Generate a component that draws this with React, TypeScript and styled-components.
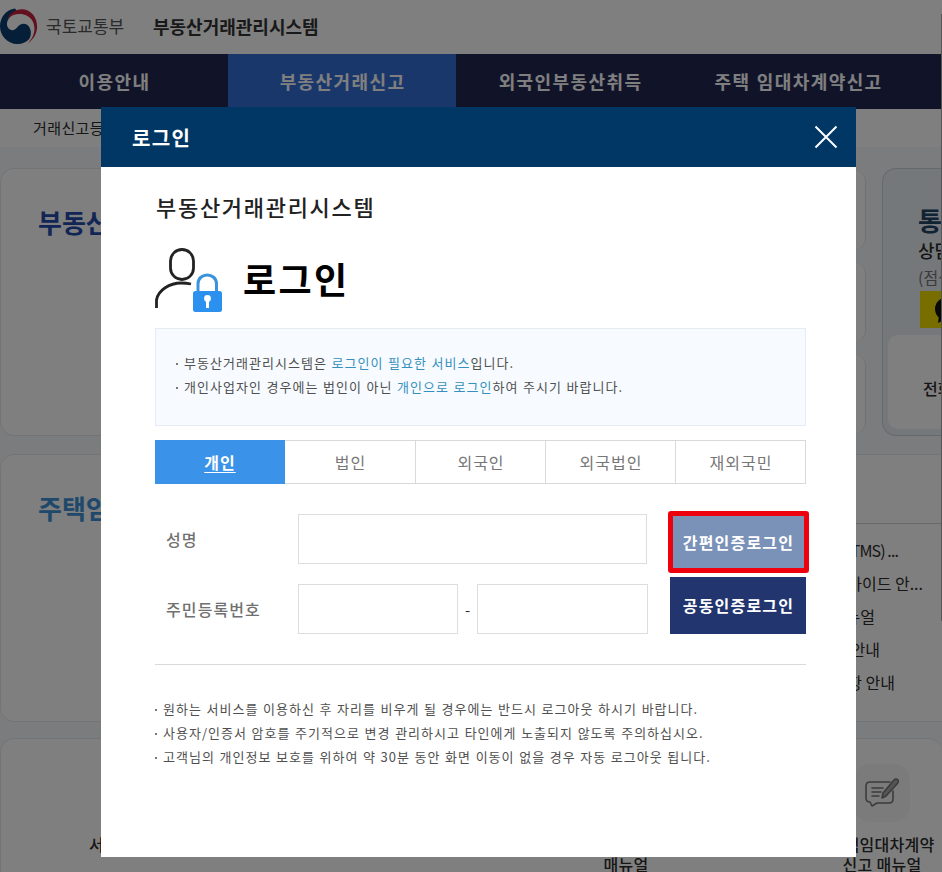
import React from 'react';
import styled, { createGlobalStyle, css } from 'styled-components';

const GlobalStyle = createGlobalStyle`
  * { box-sizing: border-box; }
  body {
    margin: 0;
    overflow: hidden;
    font-family: "Noto Sans CJK KR", "Noto Sans", sans-serif;
    color: #2c2c2c;
  }
  p, h1, h2, ul { margin: 0; padding: 0; }
  ul { list-style: none; }
`;

const Page = styled.div`
  position: relative;
  width: 942px;
  height: 872px;
  overflow: hidden;
  background: #f7f8fd;
  white-space: nowrap;
`;

const TopBar = styled.header`
  display: flex;
  align-items: center;
  height: 54px;
  padding-bottom: 1px;
  background: #fff;
`;

const Ministry = styled.span`
  margin-left: 8px;
  width: 107px;
  padding-bottom: 2px;
  font-size: 17px;
  line-height: 24px;
  color: #555;
`;

const SiteName = styled.span`
  padding-bottom: 2px;
  font-size: 18px;
  line-height: 24px;
  font-weight: 700;
  color: #333;
`;

const Nav = styled.nav`
  display: grid;
  grid-template-columns: repeat(4, 228px);
  height: 55px;
  background: #222753;
`;

const NavItem = styled.a<{ $active?: boolean }>`
  display: flex;
  align-items: center;
  justify-content: center;
  padding: 0 0 1px 1px;
  background: ${(p) => (p.$active ? '#346fd8' : 'transparent')};
  color: #fff;
  font-size: 18px;
  font-weight: 700;
  letter-spacing: 1.4px;
  word-spacing: 1px;
`;

const SubBar = styled.div`
  height: 38px;
  padding-left: 33px;
  background: #fff;
  font-size: 15px;
  line-height: 38px;
  letter-spacing: 0.4px;
`;

const Main = styled.main`
  display: grid;
  grid-template-rows: 270px 268px 150px;
  row-gap: 16px;
  padding-top: 21px;
`;

const TopRow = styled.div`
  display: grid;
  grid-template-columns: 400px 1fr 60px;
  column-gap: 16px;
  height: 268px;
`;

const Card = styled.section`
  border: 1px solid #e6e8ee;
  border-radius: 14px;
  background: #fff;
`;

const CardTitle = styled.h2<{ $light?: boolean }>`
  padding: 33px 0 0 37px;
  font-size: 26px;
  line-height: 40px;
  font-weight: 700;
  color: ${(p) => (p.$light ? '#3f91d6' : '#234bad')};
`;

const MiniCards = styled.div`
  display: grid;
  grid-template-rows: repeat(3, 80px);
  row-gap: 12px;
  padding-top: 2px;
`;

const MiniCard = styled.div`
  border-right: 1px solid #e3e3e6;
  border-radius: 12px;
  background: #fff;
`;

const CallCenter = styled.section`
  height: 268px;
  padding: 34px 0 0 5px;
  overflow: hidden;
  border: 1px solid #c9d3d9;
  border-right: 0;
  border-radius: 14px 0 0 14px;
  background: #eaf0f5;
`;

const CallTitle = styled.p`
  padding-left: 30px;
  font-size: 26px;
  line-height: 34px;
  font-weight: 700;
  color: #234466;
`;

const CallSubtitle = styled.p`
  padding-left: 30px;
  font-size: 18px;
  line-height: 26px;
  font-weight: 500;
`;

const CallHint = styled.p`
  padding-left: 30px;
  font-size: 16px;
  line-height: 28px;
  color: #777;
`;

const KakaoBadge = styled.div`
  width: 60px;
  height: 37px;
  margin: 0 0 7px 32px;
  background: #f1dc00;
`;

const CallBox = styled.div`
  height: 94px;
  padding: 41px 0 0 35px;
  border-radius: 10px 0 0 10px;
  background: #fff;
  font-size: 16px;
  line-height: 24px;
  font-weight: 500;
`;

const MiddleRow = styled.div`
  display: grid;
  grid-template-columns: 560px 1fr;
  column-gap: 16px;
`;

const NoticeCard = styled(Card)`
  border-width: 1px 0;
  border-radius: 0;
`;

const NoticeHead = styled.div`
  height: 69px;
  border-bottom: 1px solid #d3d3d6;
`;

const NoticeList = styled.ul`
  padding-top: 10px;
`;

const NoticeItem = styled.li<{ $end: number; $tight?: boolean }>`
  padding-right: ${(p) => p.$end}px;
  text-align: right;
  font-size: 16px;
  line-height: 33px;
  letter-spacing: ${(p) => (p.$tight ? '-0.9px' : '0')};
`;

const ShortcutCard = styled(Card)`
  display: grid;
  grid-template-columns: 255px 1fr 226px 87px 112px 4px;
  border-right: 0;
  padding-top: 25px;
`;

const Shortcut = styled.div`
  display: flex;
  flex-direction: column;
  align-items: center;
  font-size: 16px;
  line-height: 20px;
  font-weight: 500;
  letter-spacing: 0.3px;
  text-align: center;
`;

const ShortcutIcon = styled.div`
  display: flex;
  align-items: center;
  justify-content: center;
  width: 56px;
  height: 58px;
  margin-bottom: 12px;
  border-radius: 16px;
  background: #f7f7f7;
`;

const Backdrop = styled.div`
  position: absolute;
  inset: 0;
  background: rgba(0, 0, 0, 0.5);
`;

const ScrollEdge = styled.div`
  position: absolute;
  top: 14px;
  right: 0;
  width: 1px;
  height: 607px;
  background: #555;
`;

const Dialog = styled.div`
  position: absolute;
  left: 101px;
  top: 107px;
  width: 755px;
  height: 750px;
  background: #fff;
`;

const DialogHeader = styled.div`
  display: flex;
  align-items: center;
  justify-content: space-between;
  height: 60px;
  padding: 0 18px 0 31px;
  background: #003764;
  color: #fff;
  font-size: 20px;
  font-weight: 700;
  letter-spacing: 1.3px;
`;

const DialogBody = styled.div`
  padding: 23px 50px 0 54px;
`;

const SystemName = styled.p`
  margin-left: 1px;
  font-size: 22px;
  line-height: 32px;
  font-weight: 500;
  letter-spacing: 1.7px;
  color: #222;
`;

const LoginHeading = styled.div`
  display: flex;
  align-items: center;
  height: 66px;
  margin: 25px 0 15px;
`;

const LoginTitle = styled.h1`
  margin: 0 0 5px 20px;
  font-size: 36px;
  line-height: 50px;
  font-weight: 700;
  letter-spacing: 2.4px;
  color: #000;
`;

const InfoBox = styled.ul`
  height: 98px;
  padding: 22px 0 0 20px;
  border: 1px solid #e4ecf4;
  background: #f7fbff;
`;

const Note = styled.li`
  display: flex;
  font-size: 13px;
  line-height: 24px;
  letter-spacing: 1.03px;
  word-spacing: 0.6px;
  color: #505050;
  white-space: pre;
  &::before {
    content: "";
    align-self: center;
    flex: none;
    width: 2px;
    height: 2px;
    margin: 1px 6px 0 0;
    background: #777;
  }
`;

const Accent = styled.span`
  color: #3590bd;
`;

const Tabs = styled.div`
  display: grid;
  grid-template-columns: 130px 131px 130px 130px 130px;
  width: 651px;
  height: 44px;
  margin-top: 14px;
`;

const Tab = styled.button<{ $active?: boolean }>`
  padding: 0 0 1px 1px;
  border: 1px solid #d9d9d9;
  border-left: 0;
  border-color: ${(p) => (p.$active ? '#3a93e8' : '#d9d9d9')};
  background: ${(p) => (p.$active ? '#3a93e8' : '#fff')};
  color: ${(p) => (p.$active ? '#fff' : '#777')};
  font: ${(p) => (p.$active ? 700 : 400)} 16px "Noto Sans CJK KR", sans-serif;
  letter-spacing: 1px;
  text-decoration: ${(p) => (p.$active ? 'underline' : 'none')};
  text-underline-offset: 3px;
`;

const Form = styled.form`
  display: grid;
  grid-template-columns: 493px 136px;
  column-gap: 22px;
  height: 181px;
  padding-top: 30px;
  border-bottom: 1px solid #d9d9d9;
`;

const Fields = styled.div`
  display: grid;
  grid-template-rows: 50px 50px;
  row-gap: 20px;
`;

const Field = styled.div`
  display: flex;
  align-items: center;
`;

const Label = styled.label`
  width: 143px;
  padding: 0 0 1px 11px;
  font-size: 16px;
  font-weight: 500;
  letter-spacing: 1.1px;
  color: #707070;
`;

const Input = styled.input<{ $w: number }>`
  width: ${(p) => p.$w}px;
  height: 50px;
  border: 1px solid #ddd;
  background: #fff;
`;

const Dash = styled.span`
  width: 19px;
  text-align: center;
  font-size: 15px;
`;

const Buttons = styled.div`
  display: flex;
  flex-direction: column;
  gap: 6px;
`;

const LoginButton = styled.button<{ $simple?: boolean }>`
  position: relative;
  height: 57px;
  padding: 0 0 1px 1px;
  border: 0;
  background: ${(p) => (p.$simple ? '#7a91b8' : '#22356f')};
  color: #fff;
  font: 700 16px "Noto Sans CJK KR", sans-serif;
  letter-spacing: 1.2px;
  ${(p) =>
    p.$simple &&
    css`
      &::after {
        content: "";
        position: absolute;
        inset: -3px -3px -2px -2px;
        border: 5px solid #ee000c;
        border-radius: 3px;
      }
    `}
`;

const Footnotes = styled.ul`
  padding-top: 32px;
`;

const GovLogo = () => (
  <svg width="38" height="37" viewBox="0 0 38 37">
    <path
      d="M15 0.5C6 2 0 9 0 18.5C0 28 8 36 17 36C22.5 36 27 34 29.5 30.5C32 26 31 20 27.5 17C24 14.5 19.5 15.8 17.5 19C15.5 22 12.5 23 10 21.5C6.5 19.5 6 15 8.5 11C10.5 8 13.5 5 17 3Z"
      fill="#0a3f72"
    />
    <path d="M7 11.5C11 1 25 -3 33 6.5C40 15.5 38 29 27.5 35.5C34 29.5 36.5 20.5 32.5 13C27.5 4.5 14.5 3.5 7 11.5Z" fill="#c8223e" />
  </svg>
);

const CloseIcon = () => (
  <svg width="24" height="24" viewBox="0 0 24 24" stroke="#fff" strokeWidth="2" fill="none">
    <path d="M1.5 1.5L22.5 22.5M22.5 1.5L1.5 22.5" />
  </svg>
);

const UserLockIcon = () => (
  <svg width="68" height="66" viewBox="0 0 68 66" fill="none">
    <rect x="15.5" y="2.5" width="23" height="30" rx="11.5" stroke="#222" strokeWidth="2.8" />
    <path d="M1.5 61V53C3 43 15 36 26 36C30 36 33 36.3 36 37" stroke="#222" strokeWidth="2.8" />
    <path d="M43 45V37C43 25 61.5 25 61.5 37V45" stroke="#3b93dc" strokeWidth="3" />
    <rect x="38" y="44" width="29" height="21" rx="2.5" fill="#2c90ee" />
    <circle cx="52.5" cy="51.4" r="3.4" fill="#fff" />
    <path d="M51 52H54V61H51Z" fill="#fff" />
  </svg>
);

const ManualIcon = () => (
  <svg width="34" height="30" viewBox="0 0 34 30" fill="none" stroke="#777" strokeWidth="1.6" strokeLinecap="round" strokeLinejoin="round">
    <path d="M25 4H5Q1 4 1 8V20Q1 24 5 24L7 28L12 25H24Q28 25 28 21V13" />
    <path d="M7 10H18M7 14H16M7 18H14" />
    <path d="M17 20L18 15L29 2Q31 0 33 2Q34 4 32 6L21 18Z" fill="#aaa" />
  </svg>
);

const ChatGlyph = () => (
  <svg width="28" height="37" viewBox="0 0 28 37">
    <ellipse cx="28" cy="18" rx="13" ry="12" fill="#111" />
    <path d="M19 25L18 32L26 28Z" fill="#111" />
  </svg>
);

const NOTICES = [
  { text: '부동산거래관리시스템(RTMS) ...', end: 44, tight: true },
  { text: '주택임대차계약신고 가이드 안...', end: 19 },
  { text: '외국인 부동산 취득 매뉴얼', end: 67 },
  { text: '부동산거래신고 안내', end: 62 },
  { text: '주택 임대차 신고 사항 안내', end: 47 },
];

const TABS = ['개인', '법인', '외국인', '외국법인', '재외국민'];

export default function App() {
  return (
    <>
      <GlobalStyle />
      <Page>
        <TopBar>
          <GovLogo />
          <Ministry>국토교통부</Ministry>
          <SiteName>부동산거래관리시스템</SiteName>
        </TopBar>
        <Nav>
          <NavItem>이용안내</NavItem>
          <NavItem $active>부동산거래신고</NavItem>
          <NavItem>외국인부동산취득</NavItem>
          <NavItem>주택 임대차계약신고</NavItem>
        </Nav>
        <SubBar>거래신고등록</SubBar>
        <Main>
          <TopRow>
            <Card>
              <CardTitle>부동산거래신고</CardTitle>
            </Card>
            <MiniCards>
              <MiniCard />
              <MiniCard />
              <MiniCard />
            </MiniCards>
            <CallCenter>
              <CallTitle>통합</CallTitle>
              <CallSubtitle>상담</CallSubtitle>
              <CallHint>(점심</CallHint>
              <KakaoBadge>
                <ChatGlyph />
              </KakaoBadge>
              <CallBox>전화</CallBox>
            </CallCenter>
          </TopRow>
          <MiddleRow>
            <Card>
              <CardTitle $light>주택임대차신고</CardTitle>
            </Card>
            <NoticeCard>
              <NoticeHead />
              <NoticeList>
                {NOTICES.map((n) => (
                  <NoticeItem key={n.text} $end={n.end} $tight={n.tight}>{n.text}</NoticeItem>
                ))}
              </NoticeList>
            </NoticeCard>
          </MiddleRow>
          <ShortcutCard>
            <Shortcut>
              <ShortcutIcon />
              서비스 안내
            </Shortcut>
            <div />
            <Shortcut>
              <ShortcutIcon />
              부동산거래
              <br />
              매뉴얼
            </Shortcut>
            <div />
            <Shortcut>
              <ShortcutIcon>
                <ManualIcon />
              </ShortcutIcon>
              주택임대차계약
              <br />
              신고 매뉴얼
            </Shortcut>
          </ShortcutCard>
        </Main>
        <Backdrop />
        <ScrollEdge />
        <Dialog role="dialog">
          <DialogHeader>
            로그인
            <CloseIcon />
          </DialogHeader>
          <DialogBody>
            <SystemName>부동산거래관리시스템</SystemName>
            <LoginHeading>
              <UserLockIcon />
              <LoginTitle>로그인</LoginTitle>
            </LoginHeading>
            <InfoBox>
              <Note>부동산거래관리시스템은 <Accent>로그인이 필요한 서비스</Accent>입니다.</Note>
              <Note>개인사업자인 경우에는 법인이 아닌 <Accent>개인으로 로그인</Accent>하여 주시기 바랍니다.</Note>
            </InfoBox>
            <Tabs>
              {TABS.map((t, i) => (
                <Tab key={t} $active={i === 0}>{t}</Tab>
              ))}
            </Tabs>
            <Form>
              <Fields>
                <Field>
                  <Label>성명</Label>
                  <Input $w={349} />
                </Field>
                <Field>
                  <Label>주민등록번호</Label>
                  <Input $w={160} />
                  <Dash>-</Dash>
                  <Input $w={171} />
                </Field>
              </Fields>
              <Buttons>
                <LoginButton type="button" $simple>간편인증로그인</LoginButton>
                <LoginButton type="button">공동인증로그인</LoginButton>
              </Buttons>
            </Form>
            <Footnotes>
              <Note>원하는 서비스를 이용하신 후 자리를 비우게 될 경우에는 반드시 로그아웃 하시기 바랍니다.</Note>
              <Note>사용자/인증서 암호를 주기적으로 변경 관리하시고 타인에게 노출되지 않도록 주의하십시오.</Note>
              <Note>고객님의 개인정보 보호를 위하여 약 30분 동안 화면 이동이 없을 경우 자동 로그아웃 됩니다.</Note>
            </Footnotes>
          </DialogBody>
        </Dialog>
      </Page>
    </>
  );
}
